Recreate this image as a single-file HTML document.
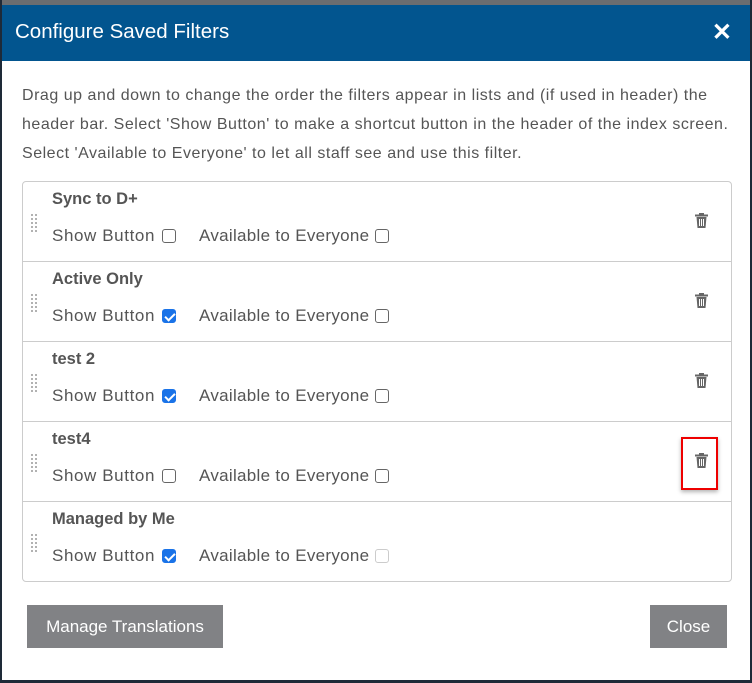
<!DOCTYPE html>
<html><head><style>
*{box-sizing:border-box;margin:0;padding:0}
body{width:752px;height:683px;background:#1e2a38;font-family:"Liberation Sans",sans-serif;position:relative;overflow:hidden}
.dlg{position:absolute;left:2px;top:0;width:748px;height:680px;background:#fff;border-top:5px solid #6b6d70}
.hdr{position:absolute;left:0;top:0;width:748px;height:56px;background:#02558f;color:#fff;font-size:20.5px;padding:15px 0 0 13px}
.x{position:absolute;right:18px;top:13px;font-size:24px;font-weight:bold}
.desc{position:absolute;left:20px;top:76px;width:730px;font-size:16px;letter-spacing:0.52px;line-height:29px;color:#555;white-space:nowrap}
.list{position:absolute;left:20px;top:176px;width:710px;height:401px;border:1px solid #ccc;border-radius:4px}
.row{position:absolute;left:0;width:708px;height:80px;border-bottom:1px solid #ccc}
.name{position:absolute;left:29px;top:8px;font-size:16.5px;font-weight:bold;color:#555}
.t{position:absolute;top:44px;font-size:17px;color:#555;white-space:nowrap}
.t1{left:29px;letter-spacing:0.6px}
.t2{left:176px;letter-spacing:0.3px}
.cb{position:absolute;top:47px;width:14px;height:14px;border:1.5px solid #666;border-radius:3px}
.c1{left:139px}.c2{left:352px}
.cb.on{background:#1a73e8;border-color:#1a73e8}
.cb.on:after{content:"";position:absolute;left:3.5px;top:0.5px;width:4px;height:8px;border:solid #fff;border-width:0 2px 2px 0;transform:rotate(45deg)}
.cb.dis{border-color:#ccc}
.grip{position:absolute;left:7px;top:31px;width:8px;height:20px;background-image:radial-gradient(circle,#999 0.8px,transparent 1px);background-size:4px 4px}
.trash{position:absolute;left:672px;top:31px}
.btn{position:absolute;top:600px;height:43px;background:#818285;color:#fff;font-size:17px;line-height:43px;text-align:center}
.sel{position:absolute;left:681px;top:437px;width:37px;height:53px;border:2px solid #e00;box-shadow:0 2px 4px rgba(0,0,0,.3)}
</style></head><body>
<div class="dlg">
<div class="hdr">Configure Saved Filters<span class="x">✕</span></div>
<div class="desc">Drag up and down to change the order the filters appear in lists and (if used in header) the<br>header bar. Select 'Show Button' to make a shortcut button in the header of the index screen.<br>Select 'Available to Everyone' to let all staff see and use this filter.</div>
<div class="list">
<div class="row" style="top:0"><div class="grip"></div><div class="name">Sync to D+</div><span class="t t1">Show Button</span><span class="cb c1"></span><span class="t t2">Available to Everyone</span><span class="cb c2"></span><svg class="trash" width="13" height="15" viewBox="0 0 13 15"><rect x="0" y="1.5" width="13" height="2" fill="#666"/><rect x="4" y="0" width="5" height="2" fill="#666"/><path d="M1.5 4h10l-1 11h-8z" fill="#666"/><path d="M4.5 6v7M6.5 6v7M8.5 6v7" stroke="#fff" stroke-width="1"/></svg></div>
<div class="row" style="top:80px"><div class="grip"></div><div class="name">Active Only</div><span class="t t1">Show Button</span><span class="cb c1 on"></span><span class="t t2">Available to Everyone</span><span class="cb c2"></span><svg class="trash" width="13" height="15" viewBox="0 0 13 15"><rect x="0" y="1.5" width="13" height="2" fill="#666"/><rect x="4" y="0" width="5" height="2" fill="#666"/><path d="M1.5 4h10l-1 11h-8z" fill="#666"/><path d="M4.5 6v7M6.5 6v7M8.5 6v7" stroke="#fff" stroke-width="1"/></svg></div>
<div class="row" style="top:160px"><div class="grip"></div><div class="name">test 2</div><span class="t t1">Show Button</span><span class="cb c1 on"></span><span class="t t2">Available to Everyone</span><span class="cb c2"></span><svg class="trash" width="13" height="15" viewBox="0 0 13 15"><rect x="0" y="1.5" width="13" height="2" fill="#666"/><rect x="4" y="0" width="5" height="2" fill="#666"/><path d="M1.5 4h10l-1 11h-8z" fill="#666"/><path d="M4.5 6v7M6.5 6v7M8.5 6v7" stroke="#fff" stroke-width="1"/></svg></div>
<div class="row" style="top:240px"><div class="grip"></div><div class="name">test4</div><span class="t t1">Show Button</span><span class="cb c1"></span><span class="t t2">Available to Everyone</span><span class="cb c2"></span><svg class="trash" width="13" height="15" viewBox="0 0 13 15"><rect x="0" y="1.5" width="13" height="2" fill="#666"/><rect x="4" y="0" width="5" height="2" fill="#666"/><path d="M1.5 4h10l-1 11h-8z" fill="#666"/><path d="M4.5 6v7M6.5 6v7M8.5 6v7" stroke="#fff" stroke-width="1"/></svg></div>
<div class="row" style="top:320px;border-bottom:none"><div class="grip"></div><div class="name">Managed by Me</div><span class="t t1">Show Button</span><span class="cb c1 on"></span><span class="t t2">Available to Everyone</span><span class="cb c2 dis"></span></div>
</div>
<div class="btn" style="left:25px;width:196px">Manage Translations</div>
<div class="btn" style="left:648px;width:77px">Close</div>
</div>
<div class="sel"></div>
</body></html>
